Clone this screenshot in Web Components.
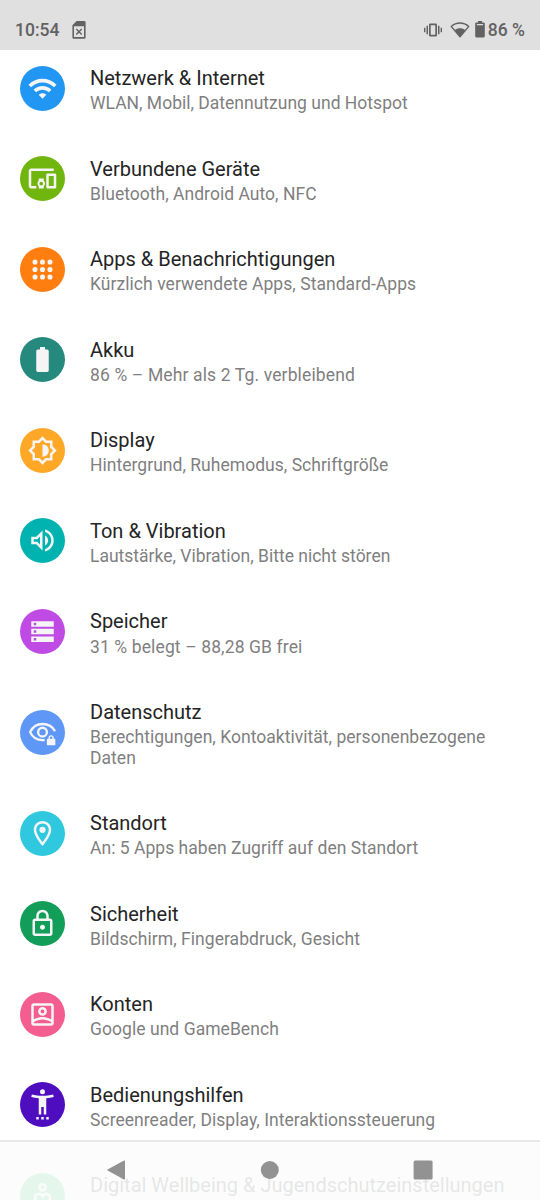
<!DOCTYPE html>
<html lang="de">
<head>
<meta charset="utf-8">
<title>Einstellungen</title>
<style>
html,body{margin:0;height:100%;overflow:hidden;background:#fff}
body{font-family:Roboto,"Noto Sans",sans-serif}
</style>
</head>
<body>
<settings-screen></settings-screen>
<script>
const glyphs = {
  wifi:'<path transform="translate(12 12.2) scale(1.02) translate(-12 -12.2)" d="M1 9l2 2c4.97-4.97 13.03-4.97 18 0l2-2C16.93 2.93 7.08 2.93 1 9zm8 8l3 3 3-3c-1.65-1.66-4.34-1.66-6 0zm-4-4l2 2c2.76-2.76 7.24-2.76 10 0l2-2C15.14 9.14 8.87 9.14 5 13z"/>',
  devices:'<path fill-rule="evenodd" d="M3 6h18V4H3c-1.1 0-2 .9-2 2v12c0 1.1.9 2 2 2h4v-2H3V6zM13 12H9v1.78c-.61.55-1 1.33-1 2.22s.39 1.67 1 2.22V20h4v-1.78c.61-.55 1-1.34 1-2.22s-.39-1.67-1-2.22V12zM11 17.5a1.5 1.5 0 1 1 0-3 1.5 1.5 0 0 1 0 3zM22 8h-6c-.5 0-1 .5-1 1v10c0 .5.5 1 1 1h6c.5 0 1-.5 1-1V9c0-.5-.5-1-1-1zM21 18h-4v-8h4z"/>',
  apps:[6,12,18].map(y=>[6,12,18].map(x=>`<circle cx="${x}" cy="${y}" r="2.05"/>`).join('')).join(''),
  battery:'<path d="M15.67 4H14V2h-4v2H8.33C7.6 4 7 4.6 7 5.33v15.33C7 21.4 7.6 22 8.33 22h7.33c.74 0 1.34-.6 1.34-1.33V5.33C17 4.6 16.4 4 15.67 4z"/>',
  display:'<path fill-rule="evenodd" d="M20 8.69V4h-4.69L12 .69 8.69 4H4v4.69L.69 12 4 15.31V20h4.69L12 23.31 15.31 20H20v-4.69L23.31 12 20 8.69zm-2 5.79V18h-3.52L12 20.48 9.52 18H6v-3.52L3.52 12 6 9.52V6h3.52L12 3.52 14.48 6H18v3.52L20.48 12 18 14.48z"/><path d="M12 7v10c2.76 0 5-2.24 5-5s-2.24-5-5-5z"/>',
  sound:'<path fill-rule="evenodd" d="M3 9v6h4l5 5V4L7 9H3zm7-.17v6.34L7.83 13H5v-2h2.83L10 8.83zM16.5 12c0-1.77-1.02-3.29-2.5-4.03v8.05c1.48-.73 2.5-2.25 2.5-4.02zM14 3.23v2.06c2.89.86 5 3.54 5 6.71s-2.11 5.85-5 6.71v2.06c4.01-.91 7-4.49 7-8.77s-2.99-7.86-7-8.77z"/>',
  storage:'<path fill-rule="evenodd" d="M3 3.7h18v4.4H3zM5 4.9v2h2v-2zM3 9.8h18v4.4H3zM5 11v2h2v-2zM3 15.9h18v4.4H3zM5 17.1v2h2v-2z"/>',
  privacy:'<g fill="none" stroke="currentColor" stroke-width="1.9"><path d="M22 11C20.2 7.400 16.500 5.200 12 5.200S4 7.600 2.100 11.700C4 15.800 7.600 18.100 12 18.100h1.700"/><circle cx="12" cy="11.700" r="3.500"/></g><path fill-rule="evenodd" d="M16.2 17h.6v-.8a2.100 2.100 0 0 1 4.200 0v.8h.6c.4 0 .7.3.7.7v3.800c0 .4-.3.7-.7.7h-5.400c-.4 0-.7-.3-.7-.7v-3.800c0-.4.3-.7.7-.7zm1.700 0h2v-.8a1 1 0 0 0-2 0z"/>',
  place:'<path fill-rule="evenodd" d="M12 2C8.130 2 5 5.130 5 9c0 5.250 7 13 7 13s7-7.750 7-13c0-3.870-3.130-7-7-7zM7 9c0-2.760 2.240-5 5-5s5 2.240 5 5c0 2.880-2.880 7.190-5 9.880C9.920 16.210 7 11.850 7 9z"/><circle cx="12" cy="9" r="2.500"/>',
  lock:'<path fill-rule="evenodd" d="M18 8h-1V6c0-2.760-2.240-5-5-5S7 3.240 7 6v2H6c-1.100 0-2 .9-2 2v10c0 1.100.9 2 2 2h12c1.100 0 2-.9 2-2V10c0-1.100-.9-2-2-2zM9 6c0-1.660 1.340-3 3-3s3 1.340 3 3v2H9V6zm9 14H6V10h12v10zm-6-3c1.100 0 2-.9 2-2s-.9-2-2-2-2 .9-2 2 .9 2 2 2z"/>',
  account:'<path fill-rule="evenodd" d="M19 3H5c-1.110 0-2 .9-2 2v14c0 1.100.89 2 2 2h14c1.100 0 2-.9 2-2V5c0-1.100-.9-2-2-2zm0 2v10.790C16.520 14.370 13.230 14 12 14s-4.520.37-7 1.790V5h14zM5 19v-.77C6.740 16.660 10.320 16 12 16s5.260.66 7 2.230V19H5z"/><circle cx="12" cy="9.500" r="2.500" fill="none" stroke="currentColor" stroke-width="2"/>',
  access:'<path d="M20.500 4c-2.610.7-5.670 1-8.500 1s-5.890-.3-8.500-1L3 6c1.860.5 4 .83 6 1v13h2v-6h2v6h2V7c2-.17 4.140-.5 6-1l-.5-2zM7 22h2v2H7zM11 22h2v2h-2zM15 22h2v2h-2z"/><circle cx="12" cy="1.800" r="2"/>',
  wellbeing:'<g fill="none" stroke="currentColor" stroke-width="2"><circle cx="12" cy="5.300" r="2.400"/><path d="M12 21.500C8 18.300 6 16.600 6 14.200c0-3.800 4.400-4.600 6-1.500 1.600-3.100 6-2.300 6 1.500 0 2.400-2 4.100-6 7.300z"/></g>'
};

function define(name, html, setup) {
  const template = document.createElement('template');
  template.innerHTML = html;
  customElements.define(name, class extends HTMLElement {
    constructor() {
      super();
      this.attachShadow({mode:'open'}).append(template.content.cloneNode(true));
    }
    connectedCallback() { if (setup) setup(this, this.shadowRoot); }
  });
}

define('round-icon', `
<style>
:host{display:block;flex:none;width:45px;height:45px;border-radius:50%;color:#f5f5f5}
svg{display:block;width:45px;height:45px;fill:currentColor}
</style><svg viewBox="-6 -6 36 36"></svg>`, (el, root) => {
  el.style.background = el.getAttribute('color');
  root.querySelector('svg').innerHTML = glyphs[el.getAttribute('glyph')];
});

define('settings-row', `
<style>
:host{display:flex;align-items:center;gap:25px;padding:0 20px;color:#242424}
.text{flex:1;min-width:0;padding:23.250px 0 19.700px}
.title{font-size:20px;line-height:24px;white-space:nowrap}
.summary{margin-top:3.100px;font-size:17.500px;line-height:20.500px;letter-spacing:var(--tracking,.03px);color:#7f7f7f}
</style>
<slot name="icon"></slot>
<div class="text"><div class="title"><slot></slot></div><div class="summary"><slot name="summary"></slot></div></div>`);

define('status-bar', `
<style>
:host{display:flex;align-items:center;box-sizing:border-box;height:50px;padding:9px 15px 0;background:#e0e0e0;color:#626262;font-size:17.500px;font-weight:500;line-height:20px;position:relative;z-index:1}
svg{display:block;fill:currentColor}
.sim{margin-left:13px}
.vibrate{margin-left:auto}
.wifi{margin-left:8px}
.cell{margin:0 3px 0 5px}
</style>
<span>10:54</span>
<svg class="sim" width="14" height="18" viewBox="0 0 14 18"><path fill-rule="evenodd" d="M4.600 0H12.300a1.300 1.300 0 0 1 1.300 1.300V16.500a1.300 1.300 0 0 1-1.300 1.300H1.700A1.300 1.300 0 0 1 .4 16.500V4.200zM2 5.300v10.800h10V5.300z"/><path d="M4.300 8.100l5.400 5.400m0-5.400l-5.400 5.400" fill="none" stroke="currentColor" stroke-width="1.400"/></svg>
<svg class="vibrate" width="18" height="14" viewBox="0 0 18 14"><path fill-rule="evenodd" d="M6.200.5h5.600a1.200 1.200 0 0 1 1.200 1.200v10.600a1.200 1.200 0 0 1-1.200 1.200H6.200A1.200 1.200 0 0 1 5 12.300V1.700A1.200 1.200 0 0 1 6.200.5zM6.700 2.300v9.400h4.600v-9.400zM2.500 2.700H4v8.600H2.500zM14 2.700h1.500v8.600H14zM0 4.700h1.400v4.600H0zM16.600 4.700H18v4.600h-1.400z"/></svg>
<svg class="wifi" width="20" height="16" viewBox="0 0 20 16"><path d="M1.200 4.400C6.300-.1 13.700-.1 18.800 4.400L10 14.800z" fill="none" stroke="currentColor" stroke-width="1.400" stroke-linejoin="round"/><path d="M4.700 8.300c3.200-2.600 7.400-2.600 10.600 0L10 15z"/></svg>
<svg class="cell" width="10" height="17" viewBox="0 0 10 17"><path fill-rule="evenodd" d="M3 0h4v1.500h1.700A1.100 1.100 0 0 1 9.800 2.600V15.300a1.100 1.100 0 0 1-1.100 1.100H1.300A1.100 1.100 0 0 1 .2 15.300V2.600A1.100 1.100 0 0 1 1.300 1.500H3zM1.900 3v1.200h6.200V3z"/></svg>
<span>86 %</span>`);

define('nav-bar', `
<style>
:host{position:fixed;left:0;right:0;bottom:0;height:60px;box-sizing:border-box;border-top:2px solid #e9e9e9;background:rgba(252,252,252,.9) padding-box;display:flex;align-items:center;justify-content:space-between;padding:0 107px;z-index:2}
svg{display:block;fill:#929292;position:relative;top:-1px}
</style>
<svg width="19" height="20" viewBox="0 0 19 20"><path d="M17 .5Q18 .2 18 1.300V18.700Q18 19.800 17 19.500L.6 10.600Q-.2 10 .6 9.400z"/></svg>
<svg width="19" height="20" viewBox="0 0 19 20"><circle cx="9.800" cy="10" r="9"/></svg>
<svg width="20" height="20" viewBox="0 0 20 20"><rect x=".6" y=".5" width="19" height="19" rx="1.500"/></svg>`);

const rows = [
  ['wifi','#2196f3','Netzwerk & Internet','WLAN, Mobil, Datennutzung und Hotspot','.01px'],
  ['devices','#70b60f','Verbundene Geräte','Bluetooth, Android Auto, NFC'],
  ['apps','#ff7e0f','Apps & Benachrichtigungen','Kürzlich verwendete Apps, Standard-Apps','.05px'],
  ['battery','#26897e','Akku','86 % – Mehr als 2 Tg. verbleibend','.13px'],
  ['display','#ffa727','Display','Hintergrund, Ruhemodus, Schriftgröße'],
  ['sound','#00b2b0','Ton & Vibration','Lautstärke, Vibration, Bitte nicht stören','0px'],
  ['storage','#bf4be4','Speicher','31 % belegt – 88,28 GB frei','.12px'],
  ['privacy','#5e97f6','Datenschutz','Berechtigungen, Kontoaktivität, personenbezogene Daten'],
  ['place','#2fc8de','Standort','An: 5 Apps haben Zugriff auf den Standort'],
  ['lock','#129d58','Sicherheit','Bildschirm, Fingerabdruck, Gesicht','.05px'],
  ['account','#f45d90','Konten','Google und GameBench','.05px'],
  ['access','#4f0dc0','Bedienungshilfen','Screenreader, Display, Interaktionssteuerung','.04px'],
  ['wellbeing','#18cc6c','Digital Wellbeing & Jugendschutzeinstellungen','']
];

define('settings-screen', `
<style>
:host{display:flex;flex-direction:column;height:100vh;overflow:hidden;background:#fff}
main{flex:1;min-height:0;margin-top:-7px}
</style>
<status-bar></status-bar><main></main><nav-bar></nav-bar>`, (el, root) => {
  root.querySelector('main').innerHTML = rows.map(([glyph,color,title,summary,tracking]) =>
    `<settings-row style="--tracking:${tracking || '.03px'}"><round-icon slot="icon" glyph="${glyph}" color="${color}"></round-icon>${title.replace('&','&amp;')}<span slot="summary">${summary || '&nbsp;'}</span></settings-row>`).join('');
});
</script>
</body>
</html>
